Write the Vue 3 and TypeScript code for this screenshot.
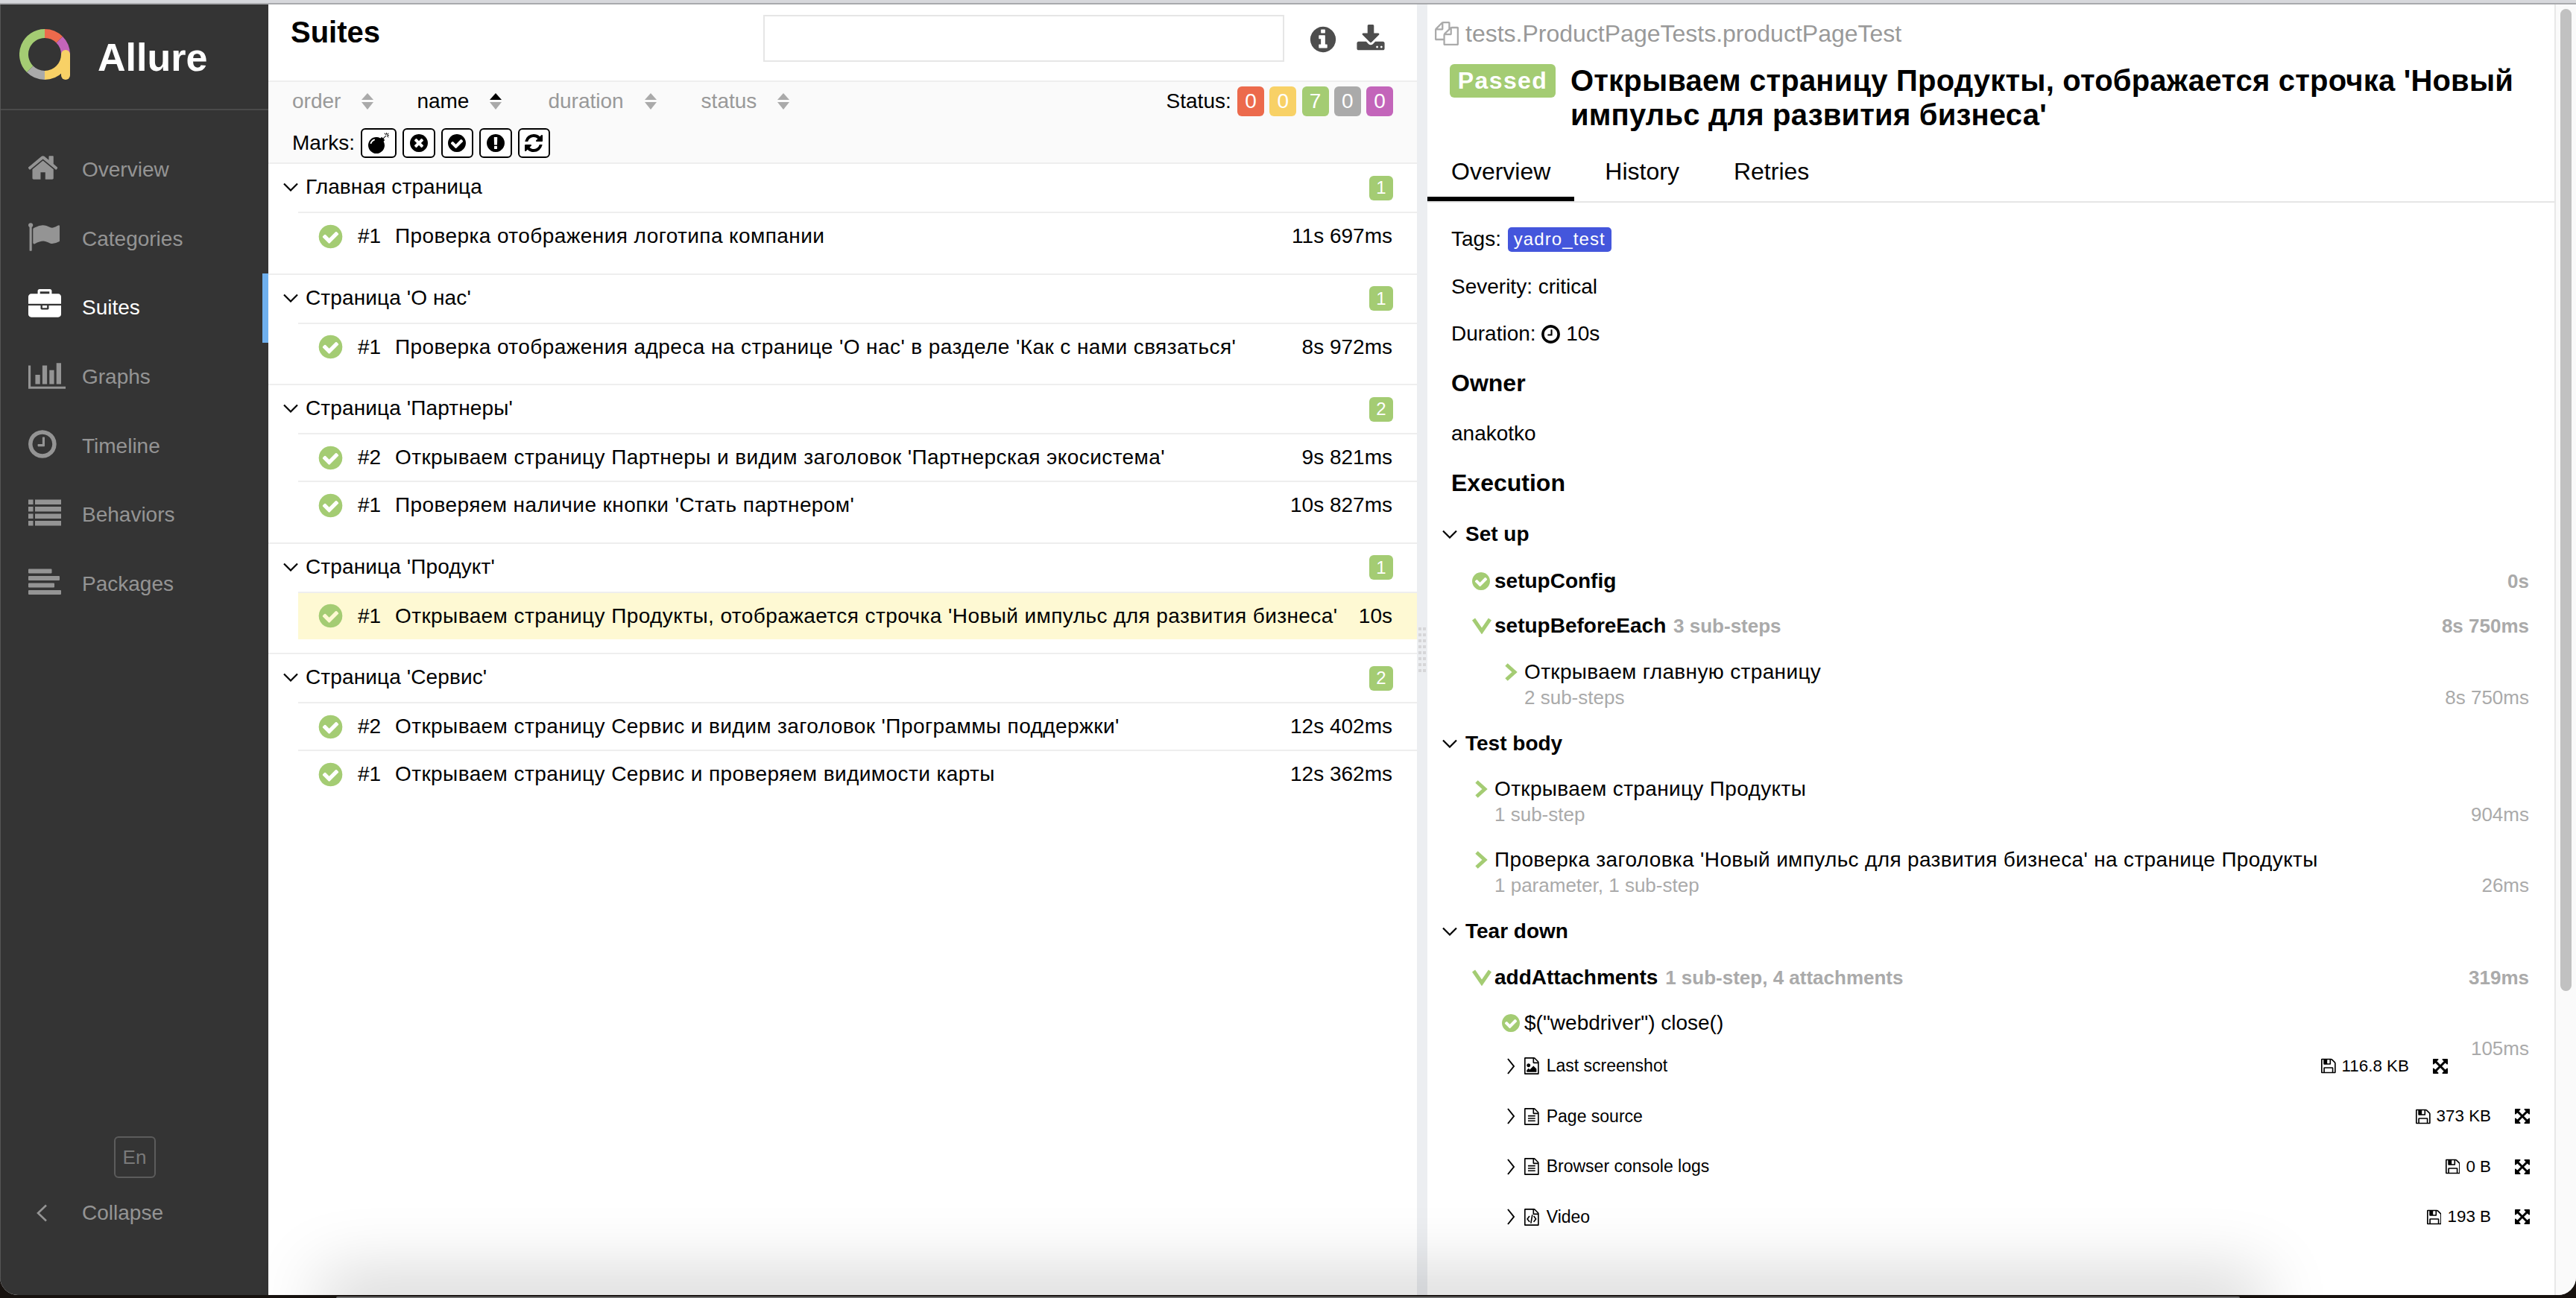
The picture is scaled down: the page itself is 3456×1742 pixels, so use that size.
<template>
  <div class="window">
    <div class="top-strip"></div>
    <div class="main">
      <aside class="side">
        <div class="brand">
          <svg class="logo" viewBox="0 0 68 68" fill="none" stroke-width="12">
            <path d="M34 6A28 28 0 0 1 53.8 14.2" stroke="#ec6a4c" />
            <path d="M53.8 14.2A28 28 0 0 1 62 34" stroke="#c365ba" />
            <path d="M62 34A28 28 0 0 1 34 62" stroke="#f8d166" />
            <path d="M62 34V62" stroke="#f8d166" stroke-linecap="round" />
            <path d="M34 62A28 28 0 0 1 14.2 53.8" stroke="#aaaaaa" />
            <path d="M14.2 53.8A28 28 0 0 1 34 6" stroke="#a4cc73" />
          </svg>
          <span class="brand-name">Allure</span>
        </div>
        <nav class="nav">
          <a v-for="item in nav" :key="item.label" class="nav-item" :class="{ active: item.label === 'Suites' }">
            <span class="nav-icon"><Icon :name="item.icon" class="nav-svg" /></span>
            {{ item.label }}
          </a>
        </nav>
        <div class="side-foot">
          <div class="lang">En</div>
          <div class="collapse">
            <span class="nav-icon">
              <svg class="collapse-arrow" viewBox="0 0 14 24" fill="none"><path d="M13 1.5 2 12l11 10.5" /></svg>
            </span>
            Collapse
          </div>
        </div>
      </aside>

      <section class="tree-pane">
        <header class="tree-head">
          <h2 class="tree-title">Suites</h2>
          <input class="search" />
          <Icon name="info" class="head-icon" />
          <Icon name="download" class="head-icon download" />
        </header>

        <div class="toolbar">
          <div class="sort-row">
            <div v-for="s in sorters" :key="s" class="sorter" :class="{ on: s === 'name' }">
              {{ s }}
              <svg class="sort-icon" viewBox="0 0 16 22">
                <path class="sort-up" d="M8 0 16 9H0z" />
                <path class="sort-down" d="M0 12H16L8 22z" />
              </svg>
            </div>
            <div class="status">
              <span>Status:</span>
              <span v-for="b in statuses" :key="b.cls" class="stat" :class="b.cls">{{ b.n }}</span>
            </div>
          </div>
          <div class="marks">
            <span>Marks:</span>
            <button v-for="(m, i) in marks" :key="m" class="mark" :class="{ wide: i === 0 }">
              <Icon :name="m" class="mark-icon" />
            </button>
          </div>
        </div>

        <div v-for="g in groups" :key="g.title" class="group">
          <div class="group-head">
            <svg class="angle" viewBox="0 0 20 12" fill="none"><path d="M1 1.5 10 10.5 19 1.5" /></svg>
            <span class="group-title">{{ g.title }}</span>
            <span class="count">{{ g.rows.length }}</span>
          </div>
          <div
            v-for="r in g.rows"
            :key="r.name"
            class="row"
            :class="{ selected: r.selected }"
          >
            <Icon name="check" class="row-check" />
            <span class="row-order">{{ r.order }}</span>
            <span class="row-name">{{ r.name }}</span>
            <span class="row-time">{{ r.time }}</span>
          </div>
        </div>
      </section>

      <div class="gutter">
        <div class="handle"><i v-for="n in 16" :key="n"></i></div>
      </div>

      <section class="detail">
        <div class="fqn">
          <Icon name="files" class="fqn-icon" />
          tests.ProductPageTests.productPageTest
        </div>
        <div class="detail-title">
          <span class="passed">Passed</span>
          <h1>Открываем страницу Продукты, отображается строчка 'Новый импульс для развития бизнеса'</h1>
        </div>
        <div class="tabs">
          <div class="tab active">Overview</div>
          <div class="tab">History</div>
          <div class="tab">Retries</div>
        </div>

        <div class="overview">
          <div class="info-row">Tags: <span class="tag">yadro_test</span></div>
          <div class="info-row">Severity: critical</div>
          <div class="info-row">Duration: <Icon name="clock" class="dur-icon" /> 10s</div>
          <div class="section-title">Owner</div>
          <div class="owner">anakotko</div>
          <div class="section-title exec">Execution</div>
        </div>

        <div v-for="stage in stages" :key="stage.title">
          <div class="stage">
            <svg class="angle" viewBox="0 0 20 12" fill="none"><path d="M1 1.5 10 10.5 19 1.5" /></svg>
            {{ stage.title }}
          </div>
          <div
            v-for="st in stage.steps"
            :key="st.name"
            class="step"
            :class="[st.cls, { nested: st.nested, strong: st.strong }]"
          >
            <span class="step-mark">
              <Icon v-if="st.mark === 'check'" name="check" class="step-check" />
              <svg v-else-if="st.mark === 'down'" class="caret-down" viewBox="0 0 26 22" fill="none">
                <path d="M2 2 13 18 24 2" />
              </svg>
              <svg v-else class="caret-right" viewBox="0 0 18 24" fill="none"><path d="M3 2 14 12 3 22" /></svg>
            </span>
            <span class="step-name">
              {{ st.name }}
              <span v-if="st.strong && st.meta" class="step-meta">{{ st.meta }}</span>
              <span v-else-if="st.meta" class="step-sub">{{ st.meta }}</span>
            </span>
            <span class="step-time">{{ st.time }}</span>
          </div>
        </div>

        <div class="attachments">
          <div v-for="(a, i) in attachments" :key="a.name" class="attachment" :class="{ shifted: i === 0 }">
            <svg class="att-arrow" viewBox="0 0 12 24" fill="none"><path d="M2 2 10 12 2 22" /></svg>
            <Icon :name="a.icon" class="att-icon" />
            <span class="att-name">{{ a.name }}</span>
            <Icon name="floppy" class="att-save" />
            <span class="att-size">{{ a.size }}</span>
            <Icon name="expand" class="att-expand" />
          </div>
        </div>
      </section>

      <div class="scrollbar"><div class="thumb"></div></div>
      <div class="dock-shadow"></div>
    </div>
    <div class="bottom-strip"><div class="dock-edge"></div></div>
  </div>
</template>

<script setup lang="ts">
import { h } from 'vue'

type IconDef = { vb?: string; d: string }

const circle = 'q0 209-103 385.5t-279.5 279.5-385.5 103-385.5-103-279.5-279.5-103-385.5 103-385.5 279.5-279.5 385.5-103 385.5 103 279.5 279.5 103 385.5z'
const filePage = 'M1596 380q28 28 48 76t20 88v1152q0 40-28 68t-68 28h-1344q-40 0-68-28t-28-68v-1600q0-40 28-68t68-28h896q40 0 88 20t76 48zm-444-244v376h376q-10-29-22-41l-313-313q-12-12-41-22zm384 1528v-1024h-416q-40 0-68-28t-28-68v-416h-768v1536h1280z'

const icons: Record<string, IconDef> = {
  home: { vb: '97 0 1598 1792', d: 'M1472 992v480q0 26-19 45t-45 19h-384v-384h-256v384h-384q-26 0-45-19t-19-45v-480q0-1 .5-3t.5-3l575-474 575 474q1 2 1 6zm223-69l-62 74q-8 9-21 11h-3q-13 0-21-7l-692-577-692 577q-12 8-24 7-13-2-21-11l-62-74q-8-10-7-23.5t11-21.5l719-599q32-26 76-26t76 26l244 204v-195q0-14 9-23t23-9h192q14 0 23 9t9 23v408l219 182q10 8 11 21.5t-7 23.5z' },
  flag: { vb: '64 0 1728 1792', d: 'M320 256q0 72-64 110v1266q0 13-9.5 22.5t-22.5 9.5h-64q-13 0-22.5-9.5t-9.5-22.5v-1266q-64-38-64-110 0-53 37.5-90.5t90.5-37.5 90.5 37.5 37.5 90.5zm1472 64v763q0 25-12.5 38.5t-39.5 27.5q-215 116-369 116-61 0-123.5-22t-108.5-48-115.5-48-142.5-22q-192 0-464 146-17 9-33 9-26 0-45-19t-19-45v-742q0-32 31-55 21-14 79-43 236-120 421-120 107 0 200 29t219 88q38 19 88 19 54 0 117.5-21t110-47 88-47 54.5-21q26 0 45 19t19 45z' },
  briefcase: { d: 'M640 256h512v-128h-512v128zm1152 640v480q0 66-47 113t-113 47h-1472q-66 0-113-47t-47-113v-480h672v160q0 26 19 45t45 19h320q26 0 45-19t19-45v-160h672zm-768 0v128h-256v-128h256zm768-480v384h-1792v-384q0-66 47-113t113-47h352v-160q0-40 28-68t68-28h576q40 0 68 28t28 68v160h352q66 0 113 47t47 113z' },
  chart: { vb: '0 0 2048 1792', d: 'M640 896v512h-256v-512h256zm384-512v1024h-256v-1024h256zm1024 1152v128h-2048v-1280h128v1152h1920zm-640-896v768h-256v-768h256zm384-384v1152h-256v-1152h256z' },
  clock: { vb: '128 0 1536 1792', d: 'M1024 544v448q0 14-9 23t-23 9h-320q-14 0-23-9t-9-23v-64q0-14 9-23t23-9h224v-352q0-14 9-23t23-9h64q14 0 23 9t9 23zm416 352q0-148-73-273t-198-198-273-73-273 73-198 198-73 273 73 273 198 198 273 73 273-73 198-198 73-273zm224 0' + circle },
  list: { vb: '0 0 44 44', d: 'M0 4.5h6.5v6.5H0zM9 4.5h35v6.5H9zM0 14h6.5v6.5H0zM9 14h35v6.5H9zM0 23.5h6.5V30H0zM9 23.5h35V30H9zM0 33h6.5v6.5H0zM9 33h35v6.5H9z' },
  bars: { vb: '0 0 44 44', d: 'M1 4.5h29.5a1 1 0 0 1 1 1v4a1 1 0 0 1-1 1H1a1 1 0 0 1-1-1v-4a1 1 0 0 1 1-1zM1 14h40a1 1 0 0 1 1 1v4a1 1 0 0 1-1 1H1a1 1 0 0 1-1-1v-4a1 1 0 0 1 1-1zM1 23.5h33a1 1 0 0 1 1 1v4a1 1 0 0 1-1 1H1a1 1 0 0 1-1-1v-4a1 1 0 0 1 1-1zM1 33h42a1 1 0 0 1 1 1v4a1 1 0 0 1-1 1H1a1 1 0 0 1-1-1v-4a1 1 0 0 1 1-1z' },
  check: { d: 'M1412 734q0-28-18-46l-91-90q-19-19-45-19t-45 19l-408 407-226-226q-19-19-45-19t-45 19l-91 90q-18 18-18 46 0 27 18 45l362 362q19 19 45 19 27 0 46-19l543-543q18-18 18-45zm252 162' + circle },
  times: { d: 'M1277 1122q0-26-19-45l-181-181 181-181q19-19 19-45 0-27-19-46l-90-90q-19-19-46-19-26 0-45 19l-181 181-181-181q-19-19-45-19-27 0-46 19l-90 90q-19 19-19 46 0 26 19 45l181 181-181 181q-19 19-19 45 0 27 19 46l90 90q19 19 46 19 26 0 45-19l181-181 181 181q19 19 45 19 27 0 46-19l90-90q19-19 19-46zm387-226' + circle },
  warn: { d: 'M896 128q209 0 385.5 103t279.5 279.5 103 385.5-103 385.5-279.5 279.5-385.5 103-385.5-103-279.5-279.5-103-385.5 103-385.5 279.5-279.5 385.5-103zm128 1247v-190q0-14-9-23.5t-22-9.5h-192q-13 0-23 10t-10 23v190q0 13 10 23t23 10h192q13 0 22-9.5t9-23.5zm-2-344l18-621q0-12-10-18-10-8-24-8h-220q-14 0-24 8-10 6-10 18l17 621q0 10 10 17.5t24 7.5h185q14 0 23.5-7.5t10.5-17.5z' },
  info: { d: 'M1152 1376v-160q0-14-9-23t-23-9h-96v-512q0-14-9-23t-23-9h-320q-14 0-23 9t-9 23v160q0 14 9 23t23 9h96v320h-96q-14 0-23 9t-9 23v160q0 14 9 23t23 9h448q14 0 23-9t9-23zm-128-896v-160q0-14-9-23t-23-9h-192q-14 0-23 9t-9 23v160q0 14 9 23t23 9h192q14 0 23-9t9-23zm640 416' + circle },
  download: { d: 'M1344 1344q0-26-19-45t-45-19-45 19-19 45 19 45 45 19 45-19 19-45zm256 0q0-26-19-45t-45-19-45 19-19 45 19 45 45 19 45-19 19-45zm128-224v320q0 40-28 68t-68 28h-1472q-40 0-68-28t-28-68v-320q0-40 28-68t68-28h465l135 136q58 56 136 56t136-56l136-136h464q40 0 68 28t28 68zm-325-569q17 41-14 70l-448 448q-18 19-45 19t-45-19l-448-448q-31-29-14-70 17-39 59-39h256v-448q0-26 19-45t45-19h256q26 0 45 19t19 45v448h256q42 0 59 39z' },
  refresh: { d: 'M1639 1056q0 5-1 7-64 268-268 434.5t-478 166.5q-146 0-282.5-55t-243.5-157l-129 129q-19 19-45 19t-45-19-19-45v-448q0-26 19-45t45-19h448q26 0 45 19t19 45-19 45l-137 137q71 66 161 102t187 36q134 0 250-65t186-179q11-17 53-117 8-23 30-23h192q13 0 22.5 9.5t9.5 22.5zm25-800v448q0 26-19 45t-45 19h-448q-26 0-45-19t-19-45 19-45l138-138q-148-137-349-137-134 0-250 65t-186 179q-11 17-53 117-8 23-30 23h-199q-13 0-22.5-9.5t-9.5-22.5v-7q65-268 270-434.5t480-166.5q146 0 284 55.5t245 156.5l130-129q19-19 45-19t45 19 19 45z' },
  bomb: { d: 'M571 589q-10-25-34-35t-49 0q-108 44-191 127t-127 191q-10 25 0 49t35 34q13 5 24 5 42 0 60-40 34-84 98.5-148.5t148.5-98.5q25-11 35-35t0-49zm942-356l46 46-244 243 68 68q19 19 19 45.5t-19 45.5l-64 64q89 161 89 343 0 143-55.5 273.5t-150 225-225 150-273.5 55.5-273.5-55.5-225-150-150-225-55.5-273.5 55.5-273.5 150-225 225-150 273.5-55.5q182 0 343 89l64-64q19-19 45.5-19t45.5 19l68 68zm8-56q-10 10-22 10-13 0-23-10l-91-90q-9-10-9-23t9-23q10-9 23-9t23 9l90 91q10 9 10 22.5t-10 22.5zm230 230q-11 9-23 9t-23-9l-90-91q-10-9-10-22.5t10-22.5q9-10 22.5-10t22.5 10l91 90q9 10 9 23t-9 23zm41-183q0 14-9 23t-23 9h-96q-14 0-23-9t-9-23 9-23 23-9h96q14 0 23 9t9 23zm-192-192v96q0 14-9 23t-23 9-23-9-9-23v-96q0-14 9-23t23-9 23 9 9 23zm151 55l-91 90q-10 10-22 10-13 0-23-10-10-9-10-22.5t10-22.5l90-91q10-9 23-9t23 9q9 10 9 23t-9 23z' },
  files: { d: 'M1696 384q40 0 68 28t28 68v1216q0 40-28 68t-68 28h-960q-40 0-68-28t-28-68v-288h-544q-40 0-68-28t-28-68v-672q0-40 20-88t48-76l408-408q28-28 76-48t88-20h416q40 0 68 28t28 68v328q68-40 128-40h416zm-544 213l-299 299h299v-299zm-640-384l-299 299h299v-299zm196 647l316-316v-416h-384v416q0 40-28 68t-68 28h-416v640h512v-256q0-40 20-88t48-76zm956 804v-1152h-384v416q0 40-28 68t-68 28h-416v640h896z' },
  fileImage: { vb: '128 0 1536 1792', d: filePage + 'm-128-448v320h-1024v-192l192-192 128 128 384-384zm-832-192q-80 0-136-56t-56-136 56-136 136-56 136 56 56 136-56 136-136 56z' },
  fileText: { vb: '128 0 1536 1792', d: filePage + 'm-1024-864q0-14 9-23t23-9h704q14 0 23 9t9 23v64q0 14-9 23t-23 9h-704q-14 0-23-9t-9-23v-64zm736 224q14 0 23 9t9 23v64q0 14-9 23t-23 9h-704q-14 0-23-9t-9-23v-64q0-14 9-23t23-9h704zm0 256q14 0 23 9t9 23v64q0 14-9 23t-23 9h-704q-14 0-23-9t-9-23v-64q0-14 9-23t23-9h704z' },
  fileCode: { vb: '128 0 1536 1792', d: filePage + 'm-928-896q8-11 21-12.5t24 6.5l51 38q11 8 12.5 21t-6.5 24l-182 243 182 243q8 11 6.5 24t-12.5 21l-51 38q-11 8-24 6.5t-21-12.5l-226-301q-14-19 0-38zm802 301q14 19 0 38l-226 301q-8 11-21 12.5t-24-6.5l-51-38q-11-8-12.5-21t6.5-24l182-243-182-243q-8-11-6.5-24t12.5-21l51-38q11-8 24-6.5t21 12.5zm-620 461q-13-2-20.5-13t-5.5-24l138-831q2-13 13-20.5t24-5.5l63 10q13 2 20.5 13t5.5 24l-138 831q-2 13-13 20.5t-24 5.5z' },
  floppy: { vb: '128 0 1536 1792', d: 'M512 1536h768v-384h-768v384zm896 0h128v-896q0-14-10-38.5t-20-34.5l-281-281q-10-10-34-20t-39-10v416q0 40-28 68t-68 28h-576q-40 0-68-28t-28-68v-416h-128v1280h128v-416q0-40 28-68t68-28h832q40 0 68 28t28 68v416zm-384-928v-320q0-13-9.5-22.5t-22.5-9.5h-192q-13 0-22.5 9.5t-9.5 22.5v320q0 13 9.5 22.5t22.5 9.5h192q13 0 22.5-9.5t9.5-22.5zm640 32v928q0 40-28 68t-68 28h-1344q-40 0-68-28t-28-68v-1344q0-40 28-68t68-28h928q40 0 88 20t76 48l280 280q28 28 48 76t20 88z' },
  expand: { vb: '128 128 1536 1536', d: 'M1411 541l-355 355 355 355 144-144q29-31 70-14 39 17 39 59v448q0 26-19 45t-45 19h-448q-42 0-59-40-17-39 14-69l144-144-355-355-355 355 144 144q31 30 14 69-17 40-59 40h-448q-26 0-45-19t-19-45v-448q0-42 40-59 39-17 69 14l144 144 355-355-355-355-144 144q-19 19-45 19-12 0-24-5-40-17-40-59v-448q0-26 19-45t45-19h448q42 0 59 40 17 39-14 69l-144 144 355 355 355-355-144-144q-31-30-14-69 17-40 59-40h448q26 0 45 19t19 45v448q0 42-39 59-13 5-25 5-26 0-45-19z' },
}

const Icon = (props: { name: string }) => {
  const def = icons[props.name]
  return h('svg', { viewBox: def.vb ?? '0 0 1792 1792', fill: 'currentColor' }, h('path', { d: def.d }))
}
Icon.props = ['name']

const nav = [
  { label: 'Overview', icon: 'home' },
  { label: 'Categories', icon: 'flag' },
  { label: 'Suites', icon: 'briefcase' },
  { label: 'Graphs', icon: 'chart' },
  { label: 'Timeline', icon: 'clock' },
  { label: 'Behaviors', icon: 'list' },
  { label: 'Packages', icon: 'bars' },
]

const sorters = ['order', 'name', 'duration', 'status']

const statuses = [
  { n: 0, cls: 'failed' },
  { n: 0, cls: 'broken' },
  { n: 7, cls: 'ok' },
  { n: 0, cls: 'skipped' },
  { n: 0, cls: 'unknown' },
]

const marks = ['bomb', 'times', 'check', 'warn', 'refresh']

const groups = [
  {
    title: 'Главная страница',
    rows: [{ order: '#1', name: 'Проверка отображения логотипа компании', time: '11s 697ms' }],
  },
  {
    title: "Страница 'О нас'",
    rows: [{ order: '#1', name: "Проверка отображения адреса на странице 'О нас' в разделе 'Как с нами связаться'", time: '8s 972ms' }],
  },
  {
    title: "Страница 'Партнеры'",
    rows: [
      { order: '#2', name: "Открываем страницу Партнеры и видим заголовок 'Партнерская экосистема'", time: '9s 821ms' },
      { order: '#1', name: "Проверяем наличие кнопки 'Стать партнером'", time: '10s 827ms' },
    ],
  },
  {
    title: "Страница 'Продукт'",
    rows: [{ order: '#1', name: "Открываем страницу Продукты, отображается строчка 'Новый импульс для развития бизнеса'", time: '10s', selected: true }],
  },
  {
    title: "Страница 'Сервис'",
    rows: [
      { order: '#2', name: "Открываем страницу Сервис и видим заголовок 'Программы поддержки'", time: '12s 402ms' },
      { order: '#1', name: 'Открываем страницу Сервис и проверяем видимости карты', time: '12s 362ms' },
    ],
  },
]

type Step = {
  name: string
  mark: 'check' | 'down' | 'right'
  time: string
  meta?: string
  nested?: boolean
  strong?: boolean
  cls?: string
}

const stages: { title: string; steps: Step[] }[] = [
  {
    title: 'Set up',
    steps: [
      { name: 'setupConfig', mark: 'check', time: '0s', strong: true },
      { name: 'setupBeforeEach', mark: 'down', time: '8s 750ms', meta: '3 sub-steps', strong: true, cls: 'parent' },
      { name: 'Открываем главную страницу', mark: 'right', time: '8s 750ms', meta: '2 sub-steps', nested: true, cls: 'tall' },
    ],
  },
  {
    title: 'Test body',
    steps: [
      { name: 'Открываем страницу Продукты', mark: 'right', time: '904ms', meta: '1 sub-step', cls: 'tall' },
      { name: "Проверка заголовка 'Новый импульс для развития бизнеса' на странице Продукты", mark: 'right', time: '26ms', meta: '1 parameter, 1 sub-step', cls: 'tall' },
    ],
  },
  {
    title: 'Tear down',
    steps: [
      { name: 'addAttachments', mark: 'down', time: '319ms', meta: '1 sub-step, 4 attachments', strong: true, cls: 'attach-parent' },
      { name: '$("webdriver") close()', mark: 'check', time: '105ms', nested: true, cls: 'overlap' },
    ],
  },
]

const attachments = [
  { name: 'Last screenshot', icon: 'fileImage', size: '116.8 KB' },
  { name: 'Page source', icon: 'fileText', size: '373 KB' },
  { name: 'Browser console logs', icon: 'fileText', size: '0 B' },
  { name: 'Video', icon: 'fileCode', size: '193 B' },
]
</script>

<style>
html,
body {
  margin: 0;
  background: #17120f;
}
</style>

<style scoped>
.window {
  width: 3456px;
  height: 1742px;
  display: flex;
  flex-direction: column;
  font-family: 'Liberation Sans', Arial, sans-serif;
  font-size: 28px;
  color: #000;
  overflow: hidden;
}

.top-strip {
  height: 4px;
  flex: none;
  background: #d7d8dc;
  border-bottom: 2px solid #a9aaad;
}

.main {
  flex: 1;
  min-height: 0;
  display: flex;
  position: relative;
  background: #fff;
  overflow: hidden;
  border-radius: 0 0 24px 24px;
}

.bottom-strip {
  height: 4px;
  flex: none;
  padding: 2px 451px 0;
  box-sizing: border-box;
}

.dock-edge {
  height: 2px;
  background: #6f6f6f;
  border-radius: 2px 2px 0 0;
}

/* sidebar */
.side {
  width: 360px;
  flex: none;
  display: flex;
  flex-direction: column;
  background: #343434;
  border-left: 1px solid #555;
  box-sizing: border-box;
  color: #949494;
}

.brand {
  height: 142px;
  flex: none;
  display: flex;
  align-items: center;
  box-sizing: border-box;
  padding: 0 0 2px 25px;
  border-bottom: 2px solid #4a4a4a;
}

.logo {
  width: 68px;
  height: 68px;
  margin-top: -4px;
}

.brand-name {
  margin: 4px 0 0 37px;
  color: #fff;
  font-size: 52px;
  font-weight: 700;
}

.nav {
  padding-top: 34px;
}

.nav-item {
  height: 92.6px;
  display: flex;
  align-items: center;
  padding-left: 37px;
  box-sizing: border-box;
}

.nav-item.active {
  color: #fff;
  border-right: 8px solid #6fb0ee;
}

.nav-icon {
  width: 72px;
  flex: none;
  display: flex;
  align-items: center;
}

.nav-svg {
  height: 44px;
  margin-top: -6px;
}

.side-foot {
  margin-top: auto;
  padding-bottom: 80px;
}

.lang {
  width: 52px;
  height: 52px;
  margin: 0 auto 17px;
  border: 2px solid #5c5c5c;
  border-radius: 6px;
  display: flex;
  align-items: center;
  justify-content: center;
  font-size: 26px;
  color: #7a7a7a;
}

.collapse {
  height: 60px;
  display: flex;
  align-items: center;
  padding-left: 37px;
}

.collapse-arrow {
  width: 14px;
  height: 24px;
  margin-left: 11px;
  stroke: currentColor;
  stroke-width: 2.6;
}

/* suites tree */
.tree-pane {
  width: 1541px;
  flex: none;
  overflow: hidden;
}

.tree-head {
  height: 102px;
  display: flex;
  align-items: flex-start;
  padding-right: 42px;
  border-bottom: 2px solid #eeeeee;
}

.tree-title {
  margin: 13px 0 0 30px;
  font-size: 40px;
  line-height: 48px;
  font-weight: 700;
}

.search {
  width: 699px;
  height: 63px;
  margin: 14px 0 0 auto;
  box-sizing: border-box;
  border: 2px solid #e6e6e6;
  background: #fff;
  outline: none;
}

.head-icon {
  width: 40px;
  height: 40px;
  margin: 27px 0 0 32px;
  color: #4d4d4d;
}

.head-icon.download {
  margin: 27px 0 0 24px;
}

.toolbar {
  height: 108px;
  padding: 0 32px;
  background: #fafafa;
  border-bottom: 2px solid #eeeeee;
}

.sort-row {
  height: 52px;
  display: flex;
  align-items: center;
}

.sorter {
  display: flex;
  align-items: center;
  gap: 28px;
  margin-right: 60px;
  color: #999;
}

.sorter.on {
  color: #000;
  margin-left: -2px;
  margin-right: 62px;
}

.sort-icon {
  width: 16px;
  height: 22px;
  fill: #aaa;
}

.sorter.on .sort-up {
  fill: #000;
}

.status {
  margin-left: auto;
  display: flex;
  align-items: center;
  gap: 7.25px;
}

.status > span:first-child {
  margin-right: 1px;
}

.stat {
  width: 36px;
  height: 40px;
  border-radius: 6px;
  color: #fff;
  display: flex;
  align-items: center;
  justify-content: center;
}

.failed {
  background: #ec6a4c;
}

.broken {
  background: #f8d166;
}

.ok {
  background: #a4cc73;
}

.skipped {
  background: #aaaaaa;
}

.unknown {
  background: #c365ba;
}

.marks {
  margin-top: 10px;
  display: flex;
  align-items: center;
  gap: 8px;
}

.mark {
  width: 43.5px;
  height: 40px;
  padding: 0;
  box-sizing: border-box;
  border: 2px solid #000;
  border-radius: 6px;
  background: #fff;
  display: flex;
  align-items: center;
  justify-content: center;
  color: #000;
}

.mark.wide {
  width: 48px;
}

.mark-icon {
  width: 28px;
  height: 28px;
}

.group {
  padding-bottom: 18.5px;
  border-bottom: 2px solid #eeeeee;
}

.group:last-child {
  border-bottom: 0;
}

.group-head {
  height: 64px;
  display: flex;
  align-items: center;
  padding: 0 32px 0 20px;
}

.angle {
  width: 20px;
  height: 12px;
  flex: none;
  margin-right: 10px;
  stroke: #000;
  stroke-width: 2.2;
}

.group-head .angle,
.group-title {
  margin-bottom: 2px;
}

.group-title {
  letter-spacing: 0.12px;
}

.count {
  margin-left: auto;
  width: 32px;
  height: 33px;
  border-radius: 6px;
  background: #a4cc73;
  color: #fff;
  font-size: 24px;
  display: flex;
  align-items: center;
  justify-content: center;
}

.row {
  height: 62px;
  margin-left: 40px;
  padding: 0 33px 0 25px;
  border-top: 2px solid #eeeeee;
  display: flex;
  align-items: center;
}

.row.selected {
  background: #fef9d3;
  background-clip: padding-box;
}

.row-check {
  width: 37px;
  height: 37px;
  flex: none;
  color: #a4cc73;
}

.row-order {
  width: 50px;
  margin-left: 18px;
  flex: none;
}

.row-name {
  letter-spacing: 0.42px;
}

.row-time {
  margin-left: auto;
}

/* drag bar */
.gutter {
  width: 14px;
  flex: none;
  background: #eceef1;
  display: flex;
  align-items: center;
  justify-content: center;
}

.handle {
  display: grid;
  grid-template-columns: 4px 4px;
  gap: 4px 2px;
}

.handle i {
  height: 4px;
  background: #d6d6d8;
}

/* test result */
.detail {
  flex: 1;
  min-width: 0;
  overflow: hidden;
}

.fqn {
  margin-top: 19px;
  padding-left: 10px;
  height: 40px;
  display: flex;
  align-items: center;
  gap: 9px;
  font-size: 32px;
  color: #999;
}

.fqn-icon {
  width: 32px;
  height: 32px;
  color: #aaa;
}

.detail-title {
  margin-top: 20px;
  padding: 0 30px;
  display: flex;
  align-items: flex-start;
}

.passed {
  width: 142px;
  height: 45px;
  margin-top: 1px;
  flex: none;
  border-radius: 6px;
  background: #a4cc73;
  color: #fff;
  font-size: 32px;
  font-weight: 700;
  letter-spacing: 1.4px;
  display: flex;
  align-items: center;
  justify-content: center;
}

.detail-title h1 {
  margin: 0 0 0 20px;
  font-size: 40px;
  line-height: 46px;
  font-weight: 700;
  letter-spacing: 0.2px;
}

.tabs {
  height: 95px;
  box-sizing: border-box;
  padding-top: 13px;
  display: flex;
  gap: 9px;
  border-bottom: 2px solid #e6e6e6;
}

.tab {
  padding: 0 32px;
  font-size: 32px;
  line-height: 80px;
  height: 80px;
  box-sizing: border-box;
}

.tab.active {
  border-bottom: 6px solid #000;
}

.overview {
  padding: 17.5px 32px 6px;
}

.info-row {
  height: 63.5px;
  display: flex;
  align-items: center;
  white-space: pre;
}

.tag {
  height: 33px;
  margin-left: 1px;
  padding: 0 8px;
  border-radius: 5px;
  background: #4456dc;
  color: #fff;
  font-size: 24px;
  letter-spacing: 1.1px;
  display: flex;
  align-items: center;
}

.dur-icon {
  width: 25px;
  height: 29px;
}

.section-title {
  height: 68px;
  display: flex;
  align-items: center;
  font-size: 32px;
  font-weight: 700;
}

.section-title.exec {
  height: 64px;
}

.owner {
  height: 68px;
  display: flex;
  align-items: center;
}

.stage {
  height: 62px;
  display: flex;
  align-items: center;
  padding-left: 20px;
  font-weight: 700;
}

.stage .angle {
  margin-right: 11px;
}

.step {
  min-height: 64px;
  box-sizing: border-box;
  padding: 0 34px 0 60px;
  display: grid;
  grid-template-columns: 30px 1fr auto;
  align-items: center;
}

.step.nested {
  padding-left: 100px;
}

.step.parent {
  min-height: 56px;
  margin-bottom: 4px;
}

.step.attach-parent {
  min-height: 62px;
}

.step.tall {
  height: 95px;
  padding-top: 13px;
  padding-bottom: 13px;
  align-items: start;
  letter-spacing: 0.35px;
}

.step.overlap {
  height: 54px;
  min-height: 0;
  align-items: start;
}

.step-mark {
  height: 34px;
  display: flex;
  align-items: center;
}

.step-check {
  width: 28px;
  height: 28px;
  margin-left: -2px;
  color: #a4cc73;
}

.caret-down {
  width: 26px;
  height: 22px;
  stroke: #a4cc73;
  stroke-width: 5;
}

.caret-right {
  width: 18px;
  height: 24px;
  margin-left: 3px;
  stroke: #a4cc73;
  stroke-width: 5;
}

.step-name {
  line-height: 34px;
}

.step.strong .step-name {
  font-weight: 700;
}

.overlap .step-mark,
.overlap .step-name {
  margin-top: 13px;
}

.step-meta {
  font-size: 26px;
  color: #aaa;
  margin-left: 2px;
}

.step-sub {
  display: block;
  font-size: 26px;
  letter-spacing: 0;
  color: #aaa;
}

.step-time {
  font-size: 26px;
  letter-spacing: 0;
  color: #aaa;
  line-height: 34px;
}

.step.strong .step-time {
  font-weight: 700;
}

.tall .step-time {
  margin-top: 34px;
}

.overlap .step-time {
  margin-top: 47px;
  margin-bottom: -30px;
}

.attachment {
  height: 67.5px;
  box-sizing: border-box;
  padding: 0 33px 0 106px;
  display: flex;
  align-items: center;
  font-size: 22.4px;
}

.attachment.shifted {
  padding-right: 143px;
}

.att-arrow {
  width: 12px;
  height: 24px;
  flex: none;
  margin-right: 12px;
  stroke: #000;
  stroke-width: 2;
}

.att-icon {
  height: 23px;
  margin-right: 10px;
}

.att-name {
  margin-right: auto;
  font-size: 23px;
}

.att-save {
  height: 23px;
  margin-right: 8px;
}

.att-size {
  margin-right: 32px;
}

.att-expand {
  width: 20px;
  height: 20px;
}

/* window chrome */
.scrollbar {
  width: 29px;
  flex: none;
  box-sizing: border-box;
  padding: 6px 6px 0 6px;
  background: #fafafa;
  border-left: 2px solid #e8e8e8;
}

.thumb {
  height: 1318px;
  border-radius: 8px;
  background: #c1c1c1;
}

.dock-shadow {
  position: absolute;
  left: 460px;
  right: 450px;
  bottom: -20px;
  height: 20px;
  pointer-events: none;
  box-shadow: 0 0 90px 30px rgba(0, 0, 0, 0.17);
}
</style>
